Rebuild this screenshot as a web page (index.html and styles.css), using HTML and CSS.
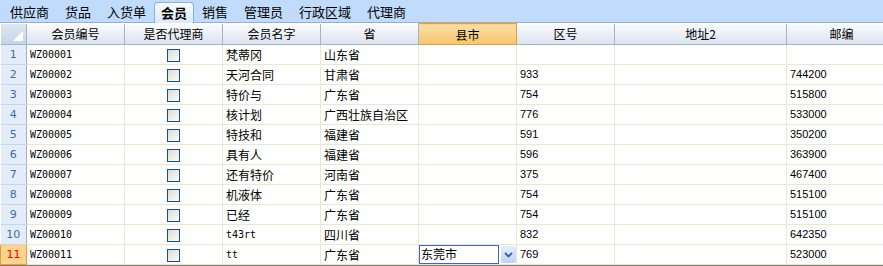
FILE: index.html
```html
<!DOCTYPE html>
<html lang="zh">
<head>
    <meta charset="UTF-8">
    <title>会员</title>
    <link rel="stylesheet" href="styles.css">
</head>
<body>

    <!-- Tab Bar -->
    <div class="tab-bar">
        <div class="tab">供应商</div>
        <div class="tab">货品</div>
        <div class="tab">入货单</div>
        <div class="tab tab-active">会员</div>
        <div class="tab">销售</div>
        <div class="tab">管理员</div>
        <div class="tab">行政区域</div>
        <div class="tab">代理商</div>
    </div>

    <!-- Member Grid -->
    <table class="grid">
        <colgroup>
            <col style="width:26px"><col style="width:98px"><col style="width:98px"><col style="width:98px">
            <col style="width:98px"><col style="width:98px"><col style="width:98px"><col style="width:172px"><col style="width:110px">
        </colgroup>
        <thead>
            <tr>
                <th class="corner"><span class="corner-mark"></span></th>
                <th>会员编号</th>
                <th>是否代理商</th>
                <th>会员名字</th>
                <th>省</th>
                <th class="th-active">县市</th>
                <th>区号</th>
                <th>地址2</th>
                <th>邮编</th>
            </tr>
        </thead>
        <tbody>
            <tr><td class="rh">1</td><td class="code">WZ00001</td><td class="chk"><span class="box"></span></td><td>梵蒂冈</td><td>山东省</td><td></td><td class="num"></td><td></td><td class="num"></td></tr>
            <tr><td class="rh">2</td><td class="code">WZ00002</td><td class="chk"><span class="box"></span></td><td>天河合同</td><td>甘肃省</td><td></td><td class="num">933</td><td></td><td class="num">744200</td></tr>
            <tr><td class="rh">3</td><td class="code">WZ00003</td><td class="chk"><span class="box"></span></td><td>特价与</td><td>广东省</td><td></td><td class="num">754</td><td></td><td class="num">515800</td></tr>
            <tr><td class="rh">4</td><td class="code">WZ00004</td><td class="chk"><span class="box"></span></td><td>核计划</td><td>广西壮族自治区</td><td></td><td class="num">776</td><td></td><td class="num">533000</td></tr>
            <tr><td class="rh">5</td><td class="code">WZ00005</td><td class="chk"><span class="box"></span></td><td>特技和</td><td>福建省</td><td></td><td class="num">591</td><td></td><td class="num">350200</td></tr>
            <tr><td class="rh">6</td><td class="code">WZ00006</td><td class="chk"><span class="box"></span></td><td>具有人</td><td>福建省</td><td></td><td class="num">596</td><td></td><td class="num">363900</td></tr>
            <tr><td class="rh">7</td><td class="code">WZ00007</td><td class="chk"><span class="box"></span></td><td>还有特价</td><td>河南省</td><td></td><td class="num">375</td><td></td><td class="num">467400</td></tr>
            <tr><td class="rh">8</td><td class="code">WZ00008</td><td class="chk"><span class="box"></span></td><td>机液体</td><td>广东省</td><td></td><td class="num">754</td><td></td><td class="num">515100</td></tr>
            <tr><td class="rh">9</td><td class="code">WZ00009</td><td class="chk"><span class="box"></span></td><td>已经</td><td>广东省</td><td></td><td class="num">754</td><td></td><td class="num">515100</td></tr>
            <tr><td class="rh">10</td><td class="code">WZ00010</td><td class="chk"><span class="box"></span></td><td class="code">t43rt</td><td>四川省</td><td></td><td class="num">832</td><td></td><td class="num">642350</td></tr>
            <tr class="row-active">
                <td class="rh">11</td><td class="code">WZ00011</td><td class="chk"><span class="box"></span></td><td class="code">tt</td><td>广东省</td>
                <td class="editing">
                    <div class="combo">
                        <div class="combo-input">东莞市</div>
                        <div class="combo-btn">
                            <svg width="9" height="6" viewBox="0 0 9 6"><path d="M1 1 L4.5 4.5 L8 1" fill="none" stroke="#3c5f9a" stroke-width="1.8"/></svg>
                        </div>
                    </div>
                </td>
                <td class="num">769</td><td></td><td class="num">523000</td>
            </tr>
        </tbody>
    </table>
    <div class="grid-bottom"></div>

</body>
</html>
```

FILE: styles.css
```css
/* Data grid window */
body {
    margin: 0;
    font-family: "Noto Sans CJK SC", "Liberation Sans", sans-serif;
    font-size: 12px;
    color: #000;
    background: #fff;
    overflow: hidden;
}

.tab-bar {
    height: 22px;
    background: #c1dbfc;
    border-bottom: 1px solid #8eb0da;
    display: flex;
    align-items: flex-end;
    padding-left: 2px;
}
.tab {
    height: 20px;
    line-height: 19px;
    padding: 0 8px;
    font-size: 13px;
    box-sizing: border-box;
}
.tab-active {
    background: linear-gradient(#f8fbff, #dde9f9);
    border: 1px solid #8eb0da;
    border-bottom: none;
    border-radius: 4px 4px 0 0;
    font-weight: bold;
    margin-bottom: -1px;
    padding: 0 6px;
    height: 21px;
}

.grid {
    border-collapse: collapse;
    table-layout: fixed;
    width: 896px;
}
.grid th {
    height: 20px;
    padding: 0;
    font-weight: normal;
    background: linear-gradient(#f9fbfd, #dbe3ee);
    border-right: 1px solid #9db6d0;
    border-bottom: 1px solid #9db6d0;
    line-height: 19px;
}
.grid th.th-active {
    background: linear-gradient(#fadea6, #f6c66b);
    border: 1px solid #f19b35;
}
.grid th.corner {
    position: relative;
    background: linear-gradient(#dde6f2, #c8d4e3);
}
.corner-mark {
    position: absolute;
    right: 3px;
    bottom: 3px;
    width: 0;
    height: 0;
    border-left: 10px solid transparent;
    border-bottom: 10px solid #fff;
}

.grid td {
    height: 19px;
    padding: 0 0 0 3px;
    border-right: 1px solid #ece7d4;
    border-bottom: 1px solid #ece7d4;
    white-space: nowrap;
    overflow: hidden;
    line-height: 19px;
}
.grid td.rh {
    padding: 0;
    text-align: center;
    color: #3a6ea8;
    background: #e3ecf8;
    border-right: 1px solid #9db6d0;
    border-bottom: 1px solid #c6d5e7;
    font-family: "DejaVu Sans", sans-serif;
    font-size: 11px;
}
.row-active td.rh {
    background: #fdd48e;
    color: #ff0000;
    border: 1px solid #f19b35;
}
.code {
    font-family: "DejaVu Sans Mono", monospace;
    font-size: 10px;
}
.num {
    font-family: "Liberation Sans", sans-serif;
    font-size: 11px;
}
.grid td.chk {
    text-align: center;
    padding: 0;
}
.box {
    display: inline-block;
    width: 11px;
    height: 11px;
    border: 1px solid #1a4f82;
    background: linear-gradient(135deg, #dcdcd6, #fbfbfa);
    vertical-align: middle;
    margin-top: -2px;
}

.grid td.editing {
    padding: 0;
}
.combo {
    display: flex;
    align-items: center;
    gap: 2px;
}
.combo-input {
    width: 78px;
    height: 17px;
    line-height: 16px;
    border: 1px solid #3b68bd;
    padding-left: 1px;
}
.combo-btn {
    width: 15px;
    height: 17px;
    background: linear-gradient(#e6effd, #bcd2f6);
    border-radius: 2px;
    display: flex;
    align-items: center;
    justify-content: center;
}

.grid-bottom {
    height: 2px;
    background: #7a7a72;
}
```
